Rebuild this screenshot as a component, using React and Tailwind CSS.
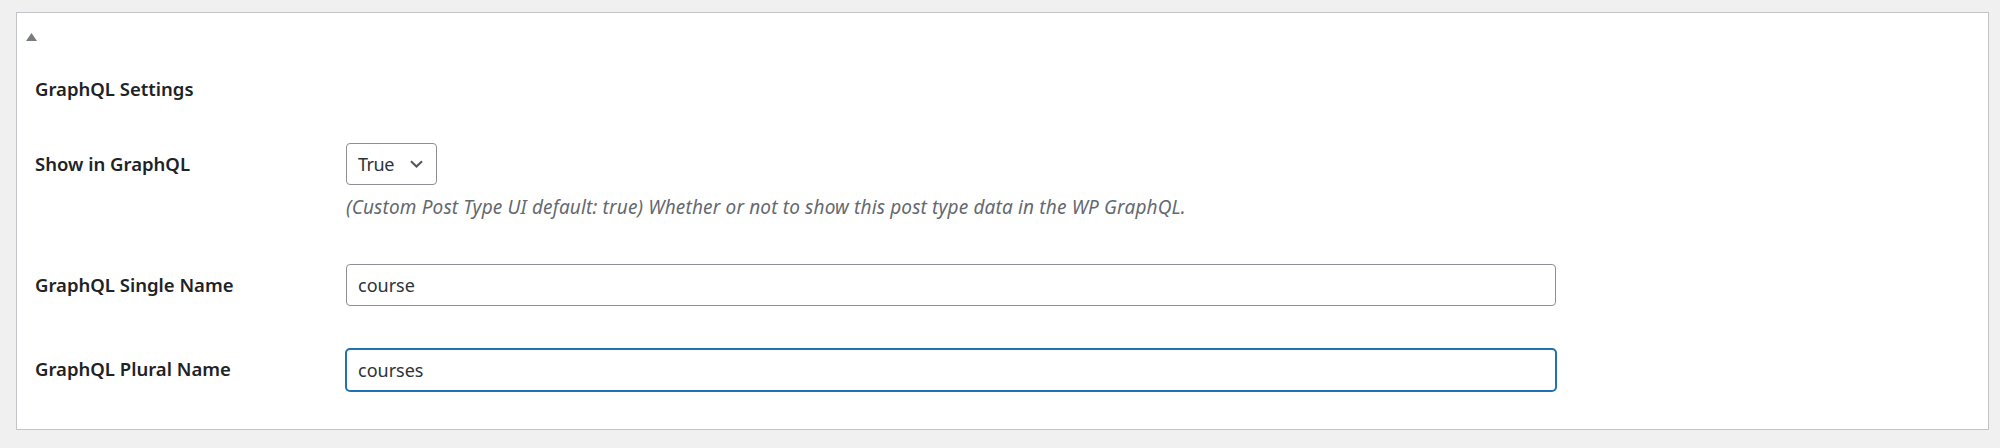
import React from "react";

const font = { fontFamily: '"Noto Sans", "Open Sans", sans-serif' };

function Row({ label, children, className = "" }) {
  return (
    <div className={"flex items-start " + className}>
      <div className="w-[311px] shrink-0 h-[42px] flex items-center text-[18.5px] font-semibold text-[#1d2327]">
        {label}
      </div>
      <div className="flex flex-col">{children}</div>
    </div>
  );
}

export default function App() {
  return (
    <div className="min-h-[448px] w-[2000px] bg-[#f0f0f1] pt-[12px]" style={font}>
      <div className="ml-[16px] w-[1973px] h-[418px] border border-[#c3c4c7] bg-white">
        <div className="pl-[9px] pt-[20px]">
          <svg width="11" height="8" viewBox="0 0 11 8" className="block">
            <polygon points="5.5,0 11,8 0,8" fill="#787c82" />
          </svg>
        </div>
        <div className="pl-[18px]">
          <h2 className="mt-[36px] h-[24px] leading-[24px] text-[18.5px] font-semibold text-[#1d2327]">
            GraphQL Settings
          </h2>
          <Row label="Show in GraphQL" className="mt-[42px]">
            <div className="w-[91px] h-[42px] border border-[#8c8f94] rounded-[4px] flex items-center justify-between pl-[11px] pr-[13px] text-[18px] text-[#2c3338]">
              <span className="tracking-[-0.5px]">True</span>
              <svg width="13" height="8" viewBox="0 0 13 8" className="block">
                <path d="M1 1.2 L6.5 6.5 L12 1.2" fill="none" stroke="#50575e" strokeWidth="2" />
              </svg>
            </div>
            <p className="mt-[10px] h-[24px] leading-[24px] text-[19px] italic text-[#646970] tracking-[0.15px] whitespace-nowrap">
              (Custom Post Type UI default: true) Whether or not to show this post type data in the WP GraphQL.
            </p>
          </Row>
          <Row label="GraphQL Single Name" className="mt-[45px]">
            <div className="w-[1210px] h-[42px] border border-[#8c8f94] rounded-[4px] flex items-center pl-[11px] text-[18px] text-[#2c3338]">
              course
            </div>
          </Row>
          <Row label="GraphQL Plural Name" className="mt-[42px]">
            <div className="ml-[-1px] w-[1212px] h-[44px] border-2 border-[#2271b1] rounded-[5px] flex items-center pl-[11px] text-[18px] text-[#2c3338]">
              courses
            </div>
          </Row>
        </div>
      </div>
    </div>
  );
}
